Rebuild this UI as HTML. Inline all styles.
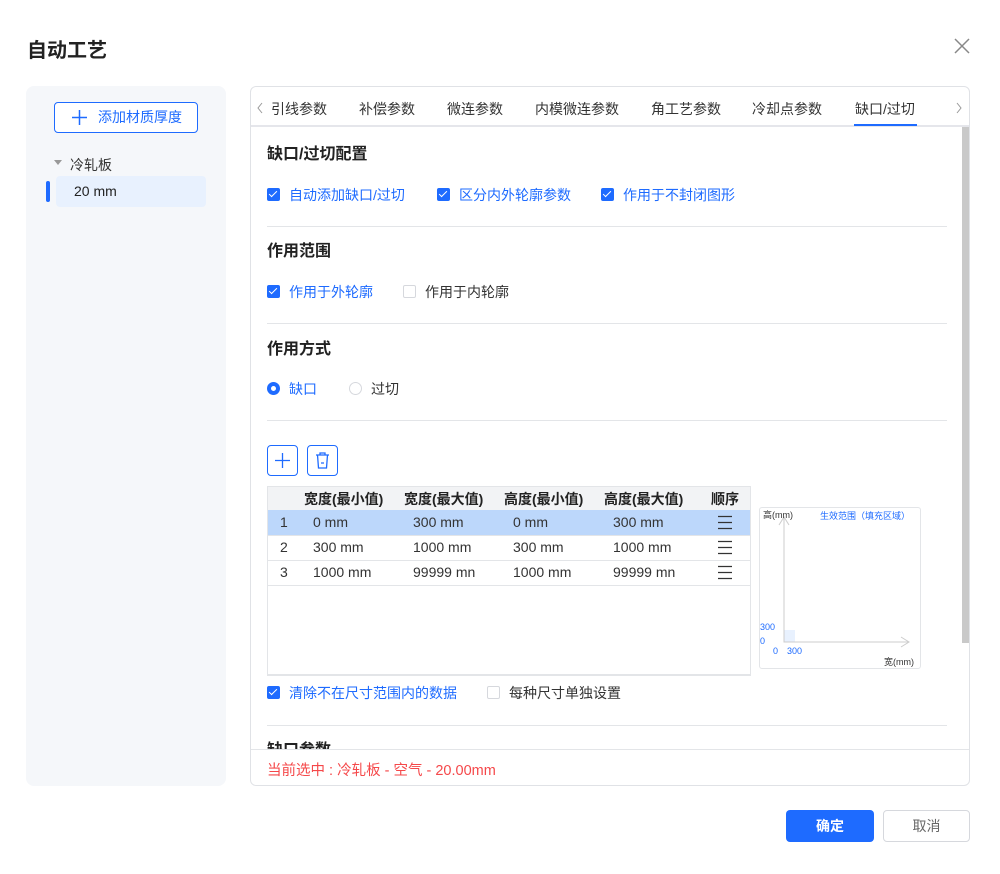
<!DOCTYPE html>
<html><head><meta charset="utf-8"><style>
*{box-sizing:border-box;margin:0;padding:0}
body{width:1000px;height:874px;background:#fff;font-family:"Liberation Sans","Noto Sans CJK SC",sans-serif;color:#222;position:relative;overflow:hidden;font-size:14px}
.a{position:absolute;white-space:nowrap}
.cb{position:absolute;width:13px;height:13px;border-radius:2px;background:#1e6bff}
.cb::after{content:"";position:absolute;left:4px;top:1px;width:3px;height:7px;border:solid #fff;border-width:0 1.5px 1.5px 0;transform:rotate(45deg)}
.cbo{position:absolute;width:13px;height:13px;border:1px solid #d6d8dd;border-radius:2px;background:#fff}
.blue{color:#1e6bff}
.hr{position:absolute;left:267px;width:680px;height:1px;background:#e3e5e8}
.h{position:absolute;left:267px;font-size:16px;font-weight:bold;color:#222}
.tab{position:absolute;top:99px;font-size:14px;color:#333}
.th{position:absolute;top:489px;font-size:14px;font-weight:bold;color:#222}
</style></head><body>
<div class="a" style="left:27px;top:34px;font-size:20px;font-weight:bold">自动工艺</div>
<svg class="a" style="left:954px;top:38px" width="16" height="16"><path d="M1 1L15 15M15 1L1 15" stroke="#888" stroke-width="1.5"/></svg>

<div class="a" style="left:26px;top:86px;width:200px;height:700px;background:#f5f7fa;border-radius:8px"></div>
<div class="a" style="left:54px;top:102px;width:144px;height:31px;border:1px solid #1e6bff;border-radius:4px;background:#fff;color:#1e6bff;font-size:14px;line-height:29px;padding-left:43px">添加材质厚度</div>
<svg class="a" style="left:72px;top:110px" width="15" height="15"><path d="M7.5 0V15M0 7.5H15" stroke="#1e6bff" stroke-width="1.5"/></svg>
<div class="a" style="left:54px;top:160px;width:0;height:0;border:4px solid transparent;border-top:5px solid #999"></div>
<div class="a" style="left:70px;top:155px;font-size:14px;color:#333">冷轧板</div>
<div class="a" style="left:56px;top:176px;width:150px;height:31px;background:#e8f1fe;border-radius:4px"></div>
<div class="a" style="left:46px;top:181px;width:4px;height:21px;background:#1e6bff;border-radius:2px"></div>
<div class="a" style="left:74px;top:183px;font-size:14px;color:#222">20 mm</div>

<div class="a" style="left:250px;top:86px;width:720px;height:700px;border:1px solid #e0e2e6;border-radius:6px"></div>
<div class="a" style="left:251px;top:125px;width:718px;height:2px;background:#e5e6eb"></div>
<svg class="a" style="left:256px;top:102px" width="8" height="12"><path d="M6 1L2 6L6 11" stroke="#999" fill="none"/></svg>
<svg class="a" style="left:955px;top:102px" width="8" height="12"><path d="M2 1L6 6L2 11" stroke="#999" fill="none"/></svg>
<div class="tab" style="left:271px">引线参数</div>
<div class="tab" style="left:359px">补偿参数</div>
<div class="tab" style="left:447px">微连参数</div>
<div class="tab" style="left:535px">内模微连参数</div>
<div class="tab" style="left:651px">角工艺参数</div>
<div class="tab" style="left:752px">冷却点参数</div>
<div class="tab blue" style="left:855px">缺口/过切</div>
<div class="a" style="left:854px;top:124px;width:63px;height:2px;background:#1e6bff"></div>
<div class="a" style="left:962px;top:127px;width:7px;height:516px;background:#c9c9c9"></div>

<div class="h" style="top:140px">缺口/过切配置</div>
<div class="cb" style="left:267px;top:188px"></div><div class="a blue" style="left:289px;top:185px">自动添加缺口/过切</div>
<div class="cb" style="left:437px;top:188px"></div><div class="a blue" style="left:459px;top:185px">区分内外轮廓参数</div>
<div class="cb" style="left:601px;top:188px"></div><div class="a blue" style="left:623px;top:185px">作用于不封闭图形</div>
<div class="hr" style="top:226px"></div>
<div class="h" style="top:237px">作用范围</div>
<div class="cb" style="left:267px;top:285px"></div><div class="a blue" style="left:289px;top:282px">作用于外轮廓</div>
<div class="cbo" style="left:403px;top:285px"></div><div class="a" style="left:425px;top:282px;color:#333">作用于内轮廓</div>
<div class="hr" style="top:323px"></div>
<div class="h" style="top:335px">作用方式</div>
<div class="a" style="left:267px;top:382px;width:13px;height:13px;border-radius:50%;border:4px solid #1e6bff"></div><div class="a blue" style="left:289px;top:379px">缺口</div>
<div class="a" style="left:349px;top:382px;width:13px;height:13px;border-radius:50%;border:1px solid #d6d8dd"></div><div class="a" style="left:371px;top:379px;color:#333">过切</div>
<div class="hr" style="top:420px"></div>

<div class="a" style="left:267px;top:445px;width:31px;height:31px;border:1px solid #1e6bff;border-radius:4px"></div>
<svg class="a" style="left:275px;top:453px" width="15" height="15"><path d="M7.5 0V15M0 7.5H15" stroke="#1e6bff" stroke-width="1.3"/></svg>
<div class="a" style="left:307px;top:445px;width:31px;height:31px;border:1px solid #1e6bff;border-radius:4px"></div>
<svg class="a" style="left:314px;top:451px" width="17" height="19"><path d="M2 4H15M6 4V2H11V4M3.5 4L4.5 17H12.5L13.5 4M7 12H10" stroke="#1e6bff" stroke-width="1.3" fill="none"/></svg>

<div class="a" style="left:267px;top:486px;width:484px;height:190px;border:1px solid #e3e5e8;border-bottom:2px solid #e3e5e8"></div>
<div class="a" style="left:268px;top:487px;width:482px;height:23px;background:#f2f3f5"></div>
<div class="a" style="left:268px;top:510px;width:482px;height:25px;background:#bcd7fb"></div>
<div class="a" style="left:268px;top:535px;width:482px;height:1px;background:#e3e5e8"></div>
<div class="a" style="left:268px;top:560px;width:482px;height:1px;background:#e3e5e8"></div>
<div class="a" style="left:268px;top:585px;width:482px;height:1px;background:#e3e5e8"></div>
<div class="th" style="left:304px">宽度(最小值)</div>
<div class="th" style="left:404px">宽度(最大值)</div>
<div class="th" style="left:504px">高度(最小值)</div>
<div class="th" style="left:604px">高度(最大值)</div>
<div class="th" style="left:711px">顺序</div>
<div style="font-size:14px;color:#333">
<div class="a" style="left:280px;top:514px">1</div><div class="a" style="left:313px;top:514px">0 mm</div><div class="a" style="left:413px;top:514px">300 mm</div><div class="a" style="left:513px;top:514px">0 mm</div><div class="a" style="left:613px;top:514px">300 mm</div>
<div class="a" style="left:280px;top:539px">2</div><div class="a" style="left:313px;top:539px">300 mm</div><div class="a" style="left:413px;top:539px">1000 mm</div><div class="a" style="left:513px;top:539px">300 mm</div><div class="a" style="left:613px;top:539px">1000 mm</div>
<div class="a" style="left:280px;top:564px">3</div><div class="a" style="left:313px;top:564px">1000 mm</div><div class="a" style="left:413px;top:564px">99999 mn</div><div class="a" style="left:513px;top:564px">1000 mm</div><div class="a" style="left:613px;top:564px">99999 mn</div>
</div>
<svg class="a" style="left:717px;top:515px" width="16" height="70"><path d="M1 1.5H15M1 7.5H15M1 13.5H15M1 26.5H15M1 32.5H15M1 38.5H15M1 51.5H15M1 57.5H15M1 63.5H15" stroke="#333" stroke-width="1.3"/></svg>

<div class="a" style="left:759px;top:507px;width:162px;height:162px;border:1px solid #e3e5e8;border-radius:3px"></div>
<svg class="a" style="left:759px;top:507px" width="162" height="162" font-family="Liberation Sans,Noto Sans CJK SC,sans-serif" font-size="9">
<rect x="25" y="123" width="11" height="12" fill="#e8f1fe"/>
<path d="M25 10V135H150M20 18L25 10L30 18M142 130L150 135L142 140" stroke="#ccc" fill="none"/>
<text x="4" y="11" fill="#333">高(mm)</text>
<text x="61" y="12" fill="#1e6bff">生效范围（填充区域）</text>
<text x="1" y="123" fill="#1e6bff">300</text>
<text x="1" y="137" fill="#1e6bff">0</text>
<text x="14" y="147" fill="#1e6bff">0</text>
<text x="28" y="147" fill="#1e6bff">300</text>
<text x="125" y="158" fill="#333">宽(mm)</text>
</svg>

<div class="cb" style="left:267px;top:686px"></div><div class="a blue" style="left:289px;top:683px">清除不在尺寸范围内的数据</div>
<div class="cbo" style="left:487px;top:686px"></div><div class="a" style="left:509px;top:683px;color:#333">每种尺寸单独设置</div>
<div class="hr" style="top:725px"></div>
<div class="a" style="left:267px;top:736px;width:100px;height:13px;overflow:hidden"><div style="font-size:16px;font-weight:bold">缺口参数</div></div>
<div class="a" style="left:251px;top:749px;width:718px;height:1px;background:#e3e5e8"></div>
<div class="a" style="left:267px;top:759px;color:#f5484a;font-size:14.5px">当前选中 : 冷轧板 - 空气 - 20.00mm</div>

<div class="a" style="left:786px;top:810px;width:88px;height:32px;background:#1e6bff;border-radius:4px;color:#fff;font-size:14px;font-weight:bold;text-align:center;line-height:32px">确定</div>
<div class="a" style="left:883px;top:810px;width:87px;height:32px;border:1px solid #d6d8dd;border-radius:4px;color:#666;font-size:14px;text-align:center;line-height:30px">取消</div>
</body></html>
